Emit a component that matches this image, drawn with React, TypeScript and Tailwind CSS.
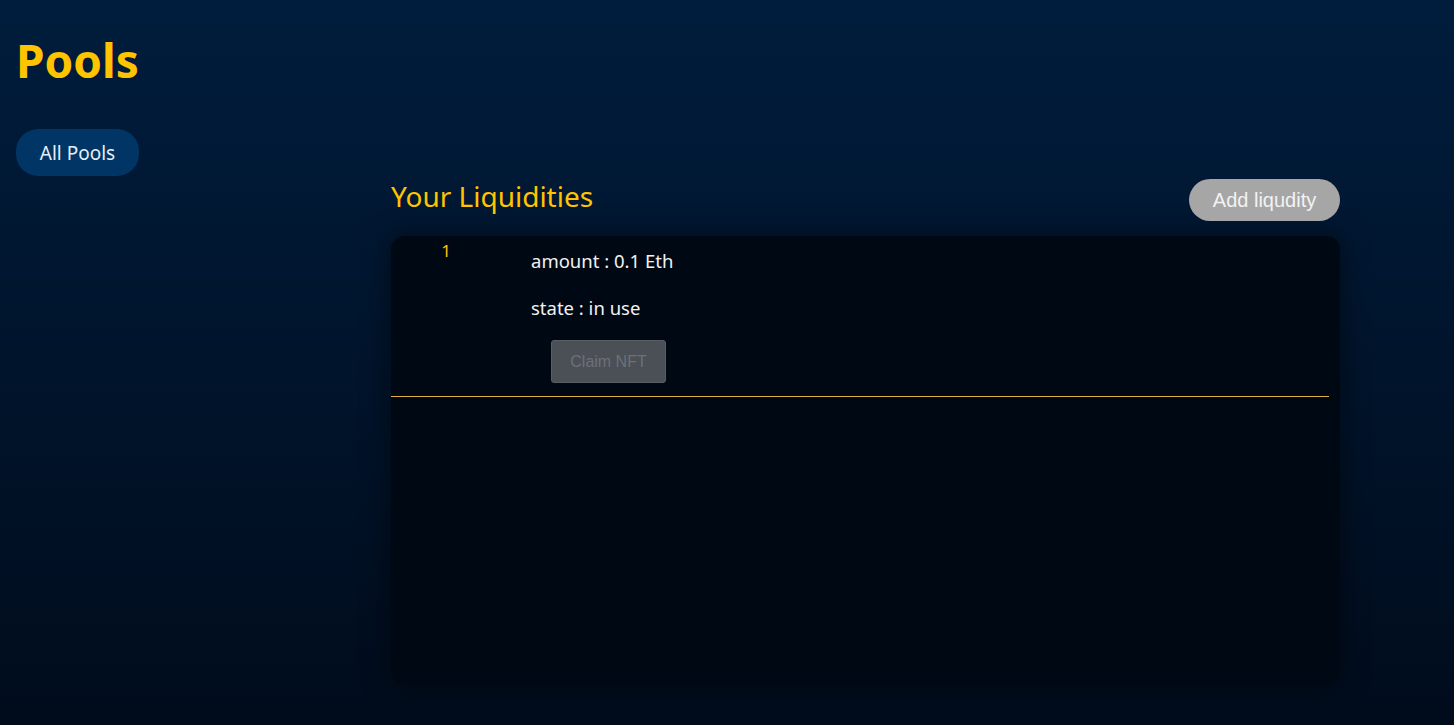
import React from "react";

export default function App() {
  return (
    <div
      className="w-full h-[725px] overflow-hidden bg-gradient-to-b from-[#001d3d] to-[#000c1c] text-white"
      style={{ fontFamily: '"Noto Sans", "Open Sans", sans-serif' }}
    >
      <div className="px-4 pt-[28px]">
        <h1 className="text-[46px] leading-[64px] font-bold text-[#ffc300]">Pools</h1>
        <div className="mt-[37px]">
          <button className="h-[47px] w-[123px] rounded-[22px] bg-[#003566] pt-[2px] text-[19px] text-[#e6eef7]">All Pools</button>
        </div>
      </div>
      <div className="ml-[391px] w-[949px]">
        <div className="flex items-start justify-between">
          <h2 className="text-[28px] leading-[40px] text-[#ffc300]">Your Liquidities</h2>
          <button
            className="h-[42px] w-[151px] rounded-full bg-[#a6a6a6] text-[20px] text-[#f2f2f2] mt-[3px]"
            style={{ fontFamily: '"Liberation Sans", Arial, sans-serif' }}
          >
            Add liqudity
          </button>
        </div>
        <div className="mt-[15px] h-[448px] rounded-[14px] bg-[#000814] shadow-[0_0_24px_6px_rgba(0,0,0,0.35)]">
          <div className="flex w-[938px] border-b border-[#e0b040]">
            <div className="w-[140px] pt-[3px] text-[17px] leading-[24px] text-[#ffc300]">
              <span className="inline-block w-[110px] text-center">1</span>
            </div>
            <div className="pt-[13px] pb-[13px]">
              <p className="text-[18.5px] leading-[24px] text-[#f2f2f2]">amount : 0.1 Eth</p>
              <p className="text-[18.5px] leading-[24px] text-[#f2f2f2] mt-[23px]">state : in use</p>
              <button
                className="ml-[20px] mt-[20px] h-[43px] w-[115px] rounded-[3px] bg-[#4b4f56] text-[16px] text-[#6c7179] border border-[#5a5e64]"
                style={{ fontFamily: '"Liberation Sans", Arial, sans-serif' }}
              >
                Claim NFT
              </button>
            </div>
          </div>
        </div>
      </div>
    </div>
  );
}
